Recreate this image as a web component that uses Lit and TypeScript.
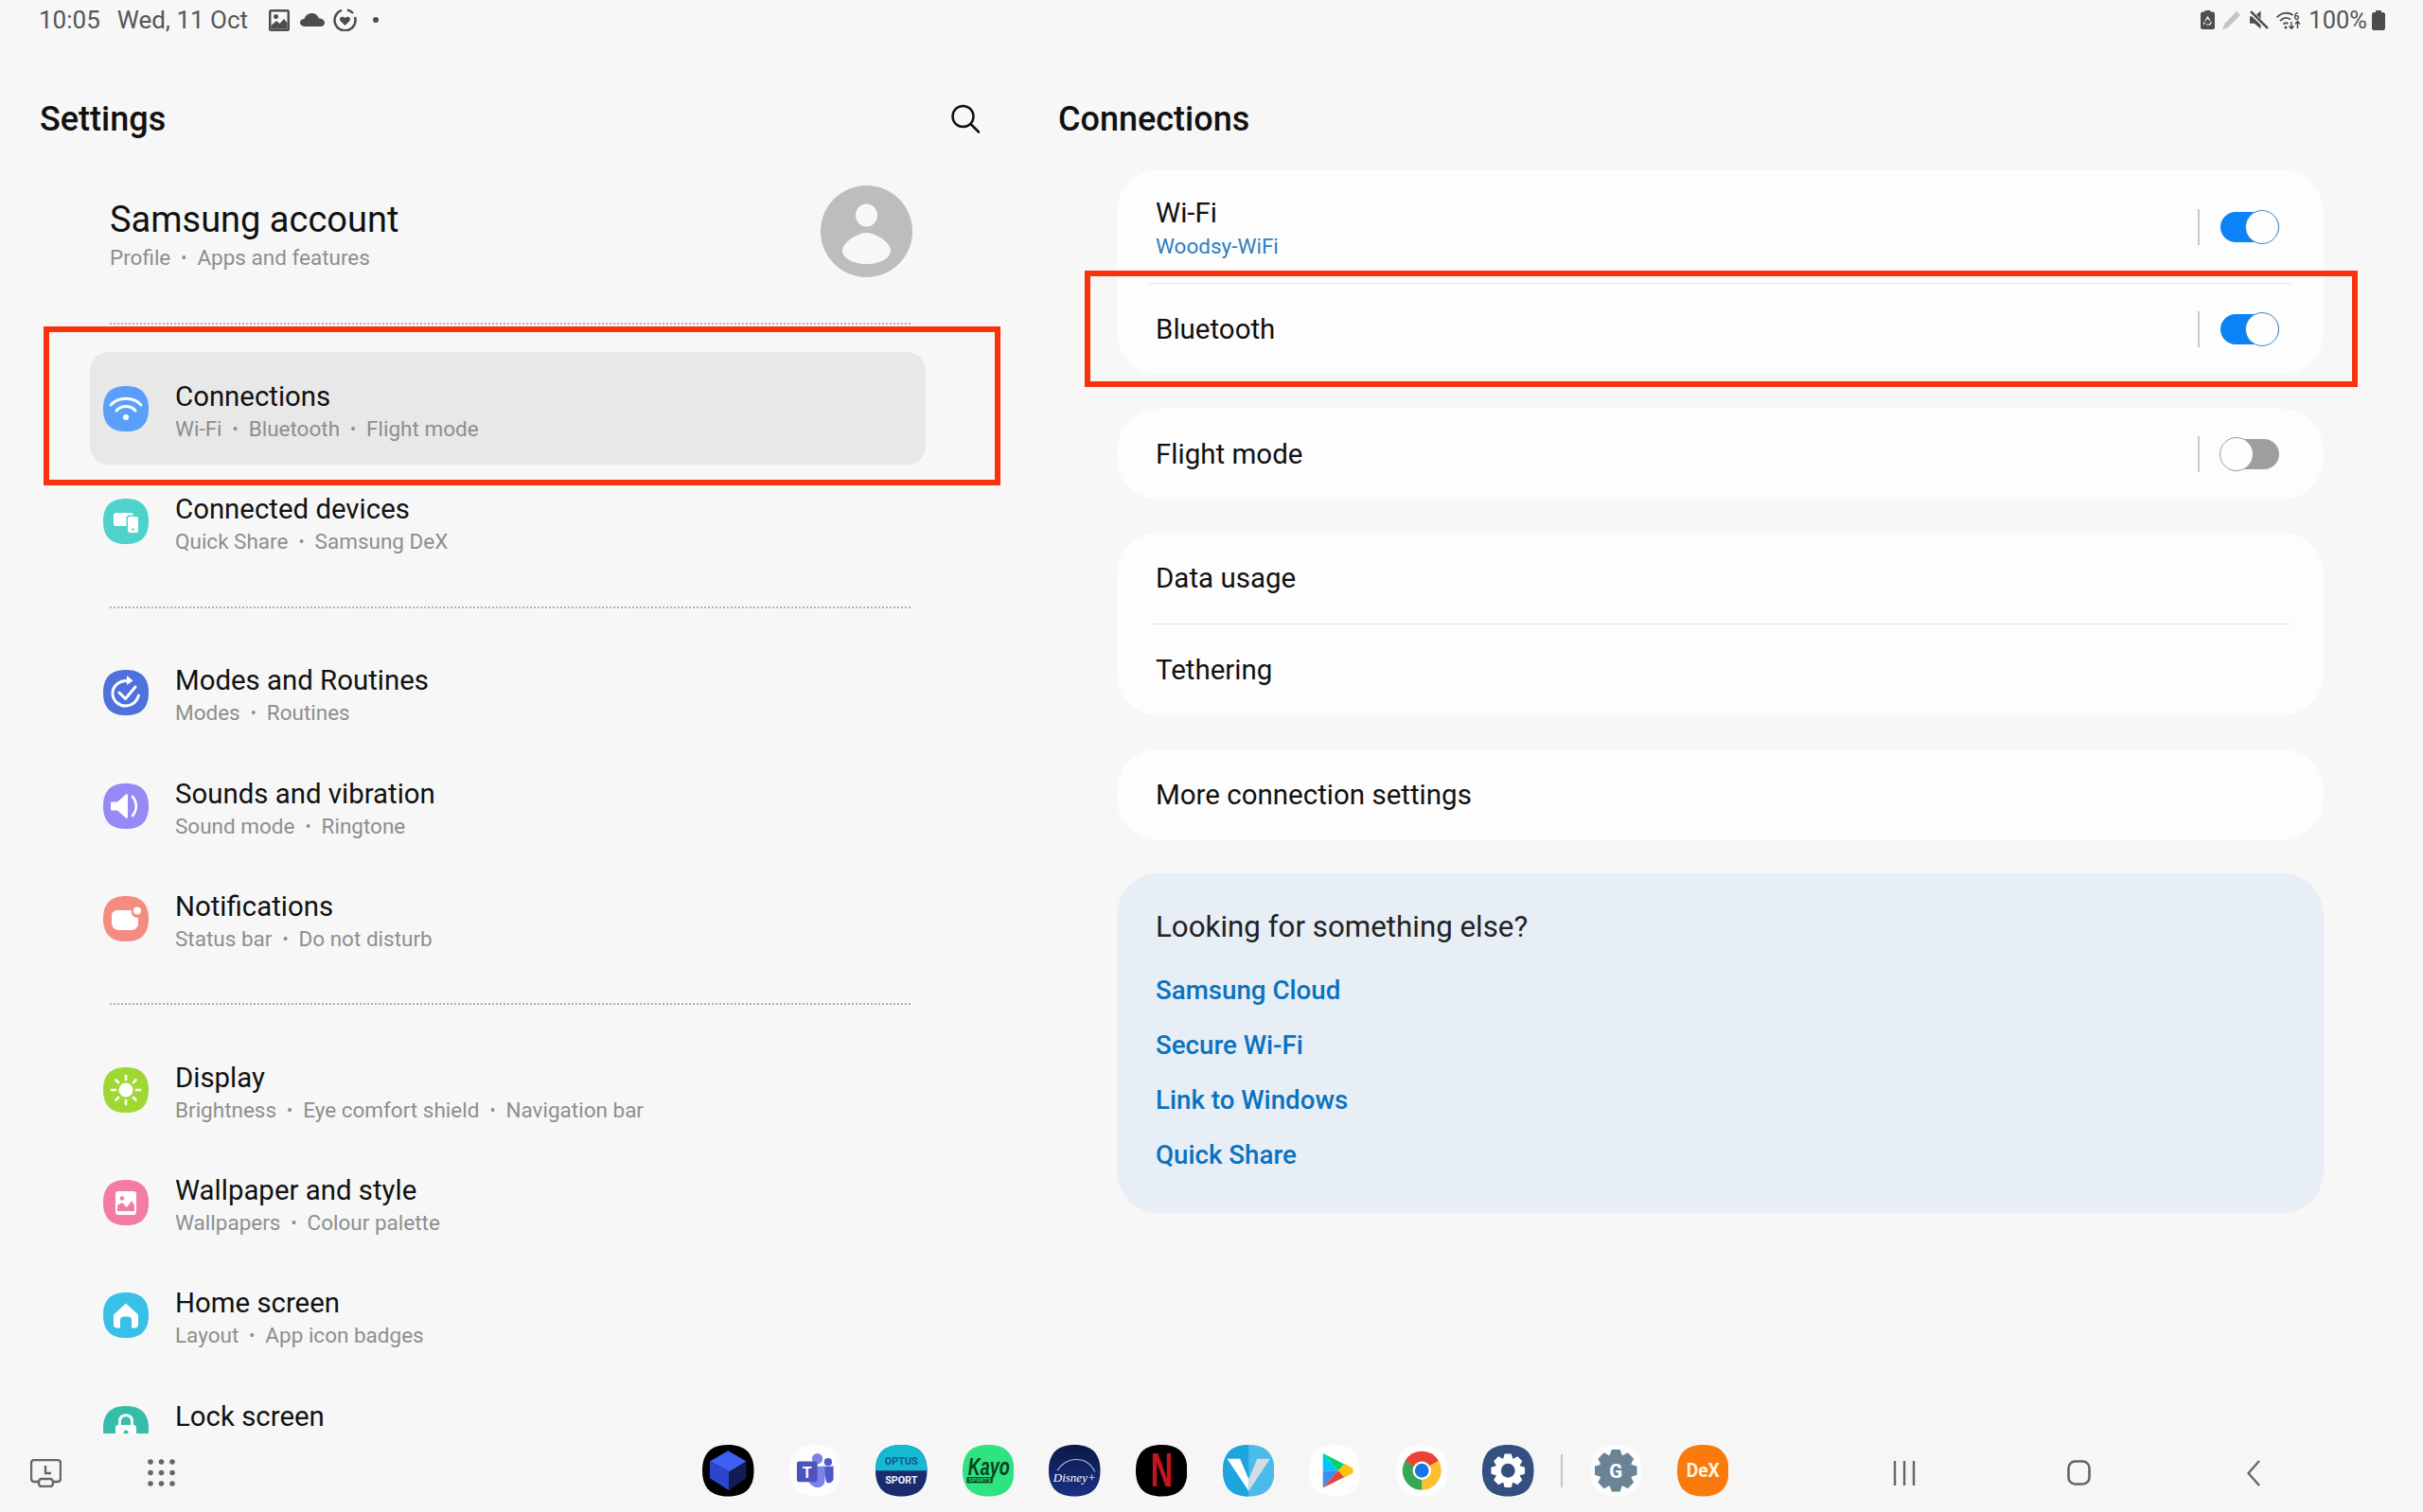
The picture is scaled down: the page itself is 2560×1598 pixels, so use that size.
import { LitElement, html, css, svg } from "lit";
import { customElement } from "lit/decorators.js";

const SQ = "M24 0C40 0 48 8 48 24C48 40 40 48 24 48C8 48 0 40 0 24C0 8 8 0 24 0Z";

function gear(cx: number, cy: number, ro: number, ri: number, n: number) {
  const pts: string[] = [];
  for (let i = 0; i < n; i++) {
    const a = (i / n) * Math.PI * 2 - Math.PI / 2;
    const s = Math.PI / n;
    const p = (r: number, t: number) => `${(cx + r * Math.cos(t)).toFixed(2)} ${(cy + r * Math.sin(t)).toFixed(2)}`;
    pts.push(p(ri, a - s * 0.95), p(ro, a - s * 0.5), p(ro, a + s * 0.5), p(ri, a + s * 0.95));
  }
  return "M" + pts.join("L") + "Z";
}
function sector(cx: number, cy: number, r: number, a0: number, a1: number) {
  const t = (d: number) => (d * Math.PI) / 180;
  return `M${cx} ${cy}L${cx + r * Math.cos(t(a0))} ${cy + r * Math.sin(t(a0))}A${r} ${r} 0 0 1 ${cx + r * Math.cos(t(a1))} ${cy + r * Math.sin(t(a1))}Z`;
}

const settingIcons: Record<string, any> = {
  wifi: svg`<path d=${SQ} fill="#5a9ffb"/><g fill="none" stroke="#fff" stroke-width="3" stroke-linecap="round"><path d="M8 20C16 11 32 11 40 20"/><path d="M14 26C19 20 29 20 34 26"/></g><circle cx="24" cy="33" r="3" fill="#fff"/>`,
  devices: svg`<path d=${SQ} fill="#4fd2cc"/><rect x="11" y="15" width="21" height="14" rx="2.5" fill="#fff"/><rect x="24.5" y="17.5" width="13.5" height="20" rx="3" fill="#4fd2cc"/><rect x="26" y="19" width="11" height="17" rx="2" fill="#fff"/><circle cx="31.5" cy="32.5" r="1.2" fill="#4fd2cc"/>`,
  modes: svg`<path d=${SQ} fill="#4f71dc"/><g fill="none" stroke="#fff" stroke-width="3" stroke-linecap="round" stroke-linejoin="round"><path d="M27 11.5C16 10.5 9.5 18 10 25.500C10.500 33 17 38.500 24.500 38C31 37.500 36 33 37.500 27"/><path d="M17 24L23.500 30.500L34 18"/></g><path d="M25 6L31.500 11.500L25 16Z" fill="#fff"/>`,
  sound: svg`<path d=${SQ} fill="#9589f6"/><path d="M9 19.500H15L24 11.500C25 11 26 11.500 26 12.500V35.500C26 36.500 25 37 24 36.500L15 28.500H9C8.500 28.500 8 28 8 27.500V20.500C8 20 8.500 19.500 9 19.500Z" fill="#fff"/><path d="M31 14C36 19 36 29 31 34" fill="none" stroke="#fff" stroke-width="2.600" stroke-linecap="round"/>`,
  notif: svg`<path d=${SQ} fill="#f58c82"/><path d="M15 15H30C29 20 32 23 37 23V29C37 33 34 36 30 36H17C12 36 9 33 9 28V21C9 17.500 11.500 15 15 15Z" fill="#fff"/><circle cx="36" cy="15.500" r="4" fill="#fff"/>`,
  display: svg`<path d=${SQ} fill="#9fd833"/><circle cx="24" cy="24" r="7.500" fill="#fff"/><g stroke="#fff" stroke-width="2.600" stroke-linecap="round"><path d="M24 9V13"/><path d="M24 35V39"/><path d="M9 24H13"/><path d="M35 24H39"/><path d="M13.500 13.500L16 16"/><path d="M32 32L34.500 34.500"/><path d="M13.500 34.500L16 32"/><path d="M32 16L34.500 13.500"/></g>`,
  wall: svg`<path d=${SQ} fill="#f47ba1"/><rect x="13" y="12" width="22" height="25" rx="3" fill="#fff"/><circle cx="20" cy="19.500" r="2.300" fill="#f47ba1"/><path d="M15 33V27L20 24L25 29L30 22L33 27V33Z" fill="#f47ba1"/>`,
  home: svg`<path d=${SQ} fill="#38c1e6"/><path d="M24 11.500L37 23.500V34C37 36 35.500 37.500 33.500 37.500H30V29C30 27 28.500 25.500 26.500 25.500H21.500C19.500 25.500 18 27 18 29V37.500H14.500C12.500 37.500 11 36 11 34V23.500Z" fill="#fff"/>`,
  lock: svg`<path d=${SQ} fill="#35bda9"/><rect x="13" y="20" width="22" height="18" rx="3" fill="#fff"/><path d="M17.500 21V16C17.500 7.500 30.500 7.500 30.500 16V21" fill="none" stroke="#fff" stroke-width="3"/><circle cx="24" cy="28" r="2.500" fill="#35bda9"/>`,
};

type Row = { icon: string; title: string; sub: string[]; selected?: boolean };
const groups: Row[][] = [
  [
    { icon: "wifi", title: "Connections", sub: ["Wi-Fi", "Bluetooth", "Flight mode"], selected: true },
    { icon: "devices", title: "Connected devices", sub: ["Quick Share", "Samsung DeX"] },
  ],
  [
    { icon: "modes", title: "Modes and Routines", sub: ["Modes", "Routines"] },
    { icon: "sound", title: "Sounds and vibration", sub: ["Sound mode", "Ringtone"] },
    { icon: "notif", title: "Notifications", sub: ["Status bar", "Do not disturb"] },
  ],
  [
    { icon: "display", title: "Display", sub: ["Brightness", "Eye comfort shield", "Navigation bar"] },
    { icon: "wall", title: "Wallpaper and style", sub: ["Wallpapers", "Colour palette"] },
    { icon: "home", title: "Home screen", sub: ["Layout", "App icon badges"] },
    { icon: "lock", title: "Lock screen", sub: [] },
  ],
];

const dockIcons: any[] = [
  svg`<path d=${SQ} fill="#000"/><polygon points="24,5.500 41,15.500 25,25 7,15.500" fill="#3f5ff2"/><polygon points="7,15.500 25,25 25,42.500 7,31" fill="#2c46c9"/><polygon points="25,25 41,15.500 41,31 25,42.500" fill="#111c55"/>`,
  svg`<path d=${SQ} fill="#fdfdfd"/><circle cx="26" cy="13" r="5" fill="#7b83eb"/><circle cx="36" cy="16" r="3.600" fill="#5059c9"/><path d="M31 20H41V31C41 35 37 36 34.500 35Z" fill="#5059c9"/><path d="M17 20H33V33C33 39 27 41 23 39C19 37 17 34 17 30Z" fill="#7b83eb"/><rect x="7" y="15.500" width="19" height="19" rx="2" fill="#4b53bc"/><text x="16.500" y="30.500" text-anchor="middle" font-family="Roboto,sans-serif" font-size="14" font-weight="700" fill="#fff">T</text>`,
  svg`<path d=${SQ} fill="#1b2c6e"/><path d="M24 0C40 0 48 8 48 24H0C0 8 8 0 24 0Z" fill="#15b9d2"/><text x="24" y="18.500" text-anchor="middle" font-family="Roboto,sans-serif" font-size="9.500" font-weight="700" fill="#14548f">OPTUS</text><text x="24" y="36.500" text-anchor="middle" font-family="Roboto,sans-serif" font-size="9.500" font-weight="700" fill="#eef2fb">SPORT</text>`,
  svg`<path d=${SQ} fill="#2ee380"/><g transform="translate(5 0) scale(0.72 1)"><text x="0" y="28.500" font-family="'Liberation Sans',sans-serif" font-size="22" font-weight="700" font-style="italic" fill="#0b3d22">Kayo</text></g><rect x="4" y="30" width="24" height="5.500" fill="#0b3d22"/><text x="16" y="34.700" text-anchor="middle" font-family="Roboto,sans-serif" font-size="5.500" font-weight="700" fill="#2ee380">SPORTS</text>`,
  svg`<defs><linearGradient id="dis" x1="0" y1="0" x2="0" y2="1"><stop offset="0" stop-color="#0b1846"/><stop offset="1" stop-color="#1c3184"/></linearGradient></defs><path d=${SQ} fill="url(#dis)"/><path d="M8 24C15 11 35 9 43 25" fill="none" stroke="#9fc6e8" stroke-width="1"/><text x="24" y="34" text-anchor="middle" font-family="'Liberation Serif',serif" font-size="11.500" font-style="italic" fill="#fff">Disney+</text>`,
  svg`<path d=${SQ} fill="#000"/><g transform="translate(24 39) scale(0.65 1)"><text x="0" y="0" text-anchor="middle" font-family="'Liberation Sans',sans-serif" font-size="44" font-weight="700" fill="#c8141c">N</text></g>`,
  svg`<path d=${SQ} fill="#4cbbe9"/><path d="M24 0C8 0 0 8 0 24C0 40 8 48 24 48Z" fill="#1ea4df"/><polygon points="4,13 16,13 24,32 24,43" fill="#fff"/><polygon points="24,32 32,13 44,13 24,43" fill="#d4dde3"/>`,
  svg`<path d=${SQ} fill="#fdfdfd"/><polygon points="13,8 13,24 27,24" fill="#00c4ff"/><polygon points="13,8 27,24 33,18" fill="#00d46f"/><polygon points="13,40 13,24 27,24" fill="#3d8df0"/><polygon points="13,40 27,24 33,30" fill="#ea4335"/><polygon points="27,24 33,17.500 41,22 41,26 33,30.500" fill="#ffc107"/>`,
  svg`<path d=${SQ} fill="#fdfdfd"/><path d=${sector(24, 24, 18, -150, -30)} fill="#ea4335"/><path d=${sector(24, 24, 18, -30, 90)} fill="#fbc02d"/><path d=${sector(24, 24, 18, 90, 210)} fill="#34a853"/><path d="M8.400 15L24 15L24 24Z" fill="#ea4335"/><circle cx="24" cy="24" r="8.500" fill="#fff"/><circle cx="24" cy="24" r="6.500" fill="#1a73e8"/>`,
  svg`<path d=${SQ} fill="#33507f"/><path d=${gear(24, 24, 16, 12, 8)} fill="#fff"/><circle cx="24" cy="24" r="6.500" fill="#33507f"/>`,
  svg`<path d=${SQ} fill="#fdfdfd"/><path d=${gear(24, 24, 20, 15.500, 8)} fill="#6b8495"/><text x="24" y="30.500" text-anchor="middle" font-family="Roboto,sans-serif" font-size="18" font-weight="700" fill="#fff">G</text>`,
  svg`<path d=${SQ} fill="#fa7a0d"/><text x="24" y="30" text-anchor="middle" font-family="Roboto,sans-serif" font-size="17" font-weight="700" fill="#fff3dd">DeX</text>`,
];

@customElement("app-root")
export class AppRoot extends LitElement {
  static styles = css`
    :host { display: flex; flex-direction: column; position: relative; width: 2560px; height: 1598px; overflow: hidden; background: #f7f7f7; font-family: Roboto, "Noto Sans", sans-serif; color: #111; }
    svg { display: block; flex: none; }
    .status { flex: none; height: 42px; display: flex; align-items: center; padding: 0 40px 0 41px; font-size: 26px; color: #555; }
    .date { margin-left: 18px; margin-right: 22px; }
    .st-left { display: flex; align-items: center; }
    .st-right { margin-left: auto; display: flex; align-items: center; gap: 8px; }
    .pct { margin-right: -3px; font-size: 25.500px; }
    .main { flex: 1; min-height: 0; display: flex; overflow: hidden; }
    .left { flex: none; width: 1118px; }
    .head { height: 84px; display: flex; align-items: center; justify-content: space-between; font-size: 36px; font-weight: 500; color: #111; padding-top: 42px; box-sizing: content-box; }
    .left .head { padding-left: 42px; padding-right: 82px; }
    .account { margin-top: 28px; height: 97px; display: flex; justify-content: space-between; padding: 0 154px 0 116px; }
    .acc-title { font-size: 38px; line-height: 46px; margin-top: 13px; }
    .acc-sub { font-size: 22.500px; line-height: 30px; margin-top: 2px; color: #8e8e8e; }
    .dots { height: 2px; margin: 0 155px 0 116px; background-image: repeating-linear-gradient(90deg, #b0b0b0 0 2px, transparent 2px 4px); }
    .account + .dots { margin-top: 48px; margin-bottom: 29px; }
    .group + .dots { margin-top: 30px; margin-bottom: 30px; }
    .group + .dots.last { margin-top: 29px; margin-bottom: 30px; }
    .group { width: 883px; margin-left: 95px; }
    .row { height: 119.400px; display: flex; align-items: center; gap: 28px; padding-left: 14px; border-radius: 20px; box-sizing: border-box; }
    .row.sel { background: #e8e8e8; }
    .r-text { padding-top: 5px; }
    .r-title { font-size: 29.400px; line-height: 36px; color: #111; }
    .r-sub { font-size: 22.500px; line-height: 30px; height: 30px; margin-top: 1px; color: #8e8e8e; white-space: nowrap; }
    .sep { font-size: 18px; margin: 0 11px; vertical-align: 1px; color: #8e8e8e; }
    .right { flex: 1; }
    .cards { margin: 12px 0 0 62px; width: 1275px; display: flex; flex-direction: column; gap: 35.500px; }
    .card { background: #fdfdfd; border-radius: 44px; }
    .item { display: flex; align-items: center; padding: 0 47px 0 41px; font-size: 29.500px; color: #111; box-sizing: border-box; }
    .item.h96 { height: 96px; }
    .item.h119 { height: 119px; }
    .grow { flex: 1; }
    .wifi-sub { font-size: 22.500px; line-height: 30px; color: #2f7fc2; margin-top: 2px; }
    .wifi-t { line-height: 36px; padding-top: 3px; }
    .vline { width: 2px; height: 38px; background: #c9c9c9; margin-right: 22px; }
    .toggle { width: 62px; height: 32px; border-radius: 16px; background: #0b82f6; display: flex; align-items: center; justify-content: flex-end; }
    .toggle.off { background: #9e9e9e; justify-content: flex-start; }
    .knob { width: 36px; height: 36px; border-radius: 50%; box-sizing: border-box; background: #fdfdfd; border: 1.500px solid #3d8ac9; flex: none; }
    .off .knob { border-color: #9a9a9a; margin-left: -1px; }
    .hr { height: 1px; background: #e6e6e6; margin: 0 34px; }
    .look { background: #e7eef5; border-radius: 44px; height: 359px; padding: 37px 41px 0; box-sizing: border-box; }
    .look-h { font-size: 31.300px; line-height: 40px; color: #222; margin-bottom: 18px; }
    .link { font-size: 27.700px; font-weight: 500; line-height: 58px; color: #0a72c2; }
    .bar { flex: none; height: 83px; display: flex; align-items: center; padding-left: 32px; background: #f6f6f6; }
    .grid-i { margin-left: 91px; }
    .dock { display: flex; align-items: center; gap: 37.100px; margin-left: 557px; margin-bottom: 4px; }
    .dock svg { width: 54.500px; height: 54.500px; }
    .dock-sep { width: 2px; height: 35px; background: #c4c4c4; margin: 0 -8.500px; }
    .nav1 { margin-left: 174px; }
    .nav2 { margin-left: 160px; }
    .nav3 { margin-left: 165px; }
    .mark { position: absolute; box-sizing: border-box; border: 6px solid #f9320c; pointer-events: none; }
    .m1 { left: 46px; top: 345px; width: 1011px; height: 168px; }
    .m2 { left: 1146px; top: 286px; width: 1345px; height: 123px; }
  `;

  private row(r: Row) {
    return html`<div class="row ${r.selected ? "sel" : ""}">
      <svg width="48" height="48" viewBox="0 0 48 48">${settingIcons[r.icon]}</svg>
      <div class="r-text">
        <div class="r-title">${r.title}</div>
        <div class="r-sub">${r.sub.map((s, i) => html`${i ? html`<span class="sep">•</span>` : ""}${s}`)}</div>
      </div>
    </div>`;
  }

  private toggle(on: boolean) {
    return html`<span class="vline"></span><span class="toggle ${on ? "" : "off"}"><span class="knob"></span></span>`;
  }

  render() {
    return html`
      <div class="status">
        <div class="st-left">
          <span>10:05</span><span class="date">Wed, 11 Oct</span>
          <svg width="22" height="23" viewBox="0 0 22 23"><rect width="22" height="23" rx="2.500" fill="#4d4d4d"/><rect x="2.500" y="2.500" width="17" height="18" fill="#f7f7f7"/><circle cx="7.500" cy="7.500" r="2.500" fill="#4d4d4d"/><path d="M2.500 17L8 12L11.500 15L16 10L19.500 14V20.500H2.500Z" fill="#4d4d4d"/></svg>
          <svg style="margin-left:11px" width="26" height="14" viewBox="0 0 26 14"><path d="M6 14C2 14 0 12 0 10C0 7.500 2 6 4.500 6C5.500 2.500 8.500 0 12.500 0C16.500 0 19 2.500 20 5.500C23.500 5.500 26 7.500 26 10C26 12 24.500 14 22 14Z" fill="#4d4d4d"/></svg>
          <svg style="margin-left:9px" width="25" height="24" viewBox="0 0 25 24"><path d="M9 1.900A11 11 0 1 0 23 9M15 1.500A11 11 0 0 1 21 5" fill="none" stroke="#4d4d4d" stroke-width="2.500"/><path d="M12.500 18L7.500 13C5.500 10 9.500 7 12.500 10C15.500 7 19.500 10 17.500 13Z" fill="#4d4d4d"/></svg>
          <svg style="margin-left:17px" width="6" height="6" viewBox="0 0 6 6"><circle cx="3" cy="3" r="3" fill="#4d4d4d"/></svg>
        </div>
        <div class="st-right">
          <svg width="15" height="20" viewBox="0 0 15 20"><path d="M4.500 0H10.500V1.500H13C14 1.500 15 2.500 15 3.500V18C15 19 14 20 13 20H2C1 20 0 19 0 18V3.500C0 2.500 1 1.500 2 1.500H4.500Z" fill="#4d4d4d"/><path d="M5 11L7.500 7L10 11M11.500 12L10 15H6M4 12L3.500 15" fill="none" stroke="#f7f7f7" stroke-width="1.200"/></svg>
          <svg width="20" height="21" viewBox="0 0 20 21"><path d="M15 1L19 5L6 18L0 20.500L2 14.500Z" fill="#c4c4c4"/></svg>
          <svg width="21" height="20" viewBox="0 0 20 19"><path d="M1 6H5.500L12 0.500V18.500L5.500 13H1Z" fill="#4d4d4d"/><path d="M1 1L19 18" stroke="#f7f7f7" stroke-width="4.500"/><path d="M2 1L19 18" stroke="#4d4d4d" stroke-width="2.400"/></svg>
          <svg width="26" height="20" viewBox="0 0 26 20"><g fill="none" stroke="#4d4d4d" stroke-width="1.800"><path d="M0.500 7.500C5.500 2 13 1.500 17.500 5"/><path d="M4 11C7.500 7.500 11.500 7 15 9.500"/><path d="M7.500 14.500C9 13 11 13 12.500 14"/></g><circle cx="10" cy="18" r="1.500" fill="#4d4d4d"/><text x="18.500" y="9.500" font-family="Roboto,sans-serif" font-size="10" font-weight="700" fill="#4d4d4d">6</text><path d="M16 12V19M13.500 16.500L16 19.500L18.500 16.500M22.500 19V12M20 14.500L22.500 11.500L25 14.500" fill="none" stroke="#4d4d4d" stroke-width="1.500"/></svg>
          <span class="pct">100%</span>
          <svg width="14" height="21" viewBox="0 0 14 21"><path d="M4 0H10V2H12C13 2 14 3 14 4V19C14 20 13 21 12 21H2C1 21 0 20 0 19V4C0 3 1 2 2 2H4Z" fill="#4d4d4d"/></svg>
        </div>
      </div>

      <div class="main">
        <div class="left">
          <div class="head">
            <span>Settings</span>
            <svg width="32" height="32" viewBox="0 0 32 32"><circle cx="13.500" cy="13" r="11" fill="none" stroke="#111" stroke-width="2.500"/><path d="M21.500 21L30 29.500" stroke="#111" stroke-width="2.500" stroke-linecap="round"/></svg>
          </div>
          <div class="account">
            <div>
              <div class="acc-title">Samsung account</div>
              <div class="acc-sub">Profile<span class="sep">•</span>Apps and features</div>
            </div>
            <svg width="97" height="97" viewBox="0 0 97 97"><circle cx="48.500" cy="48.500" r="48.500" fill="#bdbdbd"/><ellipse cx="48.500" cy="31.500" rx="11.500" ry="12" fill="#f7f7f7"/><path d="M48.500 50C58 50 74 60 74 69C74 77 62 83 48.500 83C35 83 23 77 23 69C23 60 39 50 48.500 50Z" fill="#f7f7f7"/></svg>
          </div>
          <div class="dots"></div>
          ${groups.map((g, i) => html`${i ? html`<div class="dots ${i === 2 ? "last" : ""}"></div>` : ""}<div class="group">${g.map((r) => this.row(r))}</div>`)}
        </div>

        <div class="right">
          <div class="head">Connections</div>
          <div class="cards">
            <div class="card">
              <div class="item h119"><div class="grow"><div class="wifi-t">Wi-Fi</div><div class="wifi-sub">Woodsy-WiFi</div></div>${this.toggle(true)}</div>
              <div class="hr"></div>
              <div class="item h96"><span class="grow">Bluetooth</span>${this.toggle(true)}</div>
            </div>
            <div class="card"><div class="item h96"><span class="grow">Flight mode</span>${this.toggle(false)}</div></div>
            <div class="card">
              <div class="item h96">Data usage</div>
              <div class="hr"></div>
              <div class="item h96">Tethering</div>
            </div>
            <div class="card"><div class="item h96">More connection settings</div></div>
            <div class="look">
              <div class="look-h">Looking for something else?</div>
              <div class="link">Samsung Cloud</div>
              <div class="link">Secure Wi-Fi</div>
              <div class="link">Link to Windows</div>
              <div class="link">Quick Share</div>
            </div>
          </div>
        </div>
      </div>

      <div class="bar">
        <svg width="33" height="30" viewBox="0 0 33 30"><path d="M8 24H4C2.500 24 1 22.500 1 21V4C1 2.500 2.500 1 4 1H29C30.500 1 32 2.500 32 4V21C32 22.500 30.500 24 29 24H25" fill="none" stroke="#666" stroke-width="2.400"/><rect x="9" y="21" width="15" height="8" rx="3" fill="none" stroke="#666" stroke-width="2.400"/><path d="M16 7V15H22" fill="none" stroke="#666" stroke-width="2.400"/></svg>
        <svg class="grid-i" width="29" height="29" viewBox="0 0 29 29" fill="#666">${[3, 14.5, 26].flatMap((y) => [3, 14.5, 26].map((x) => svg`<circle cx=${x} cy=${y} r="2.800"/>`))}</svg>
        <div class="dock">
          ${dockIcons.map((d, i) => html`${i === 10 ? html`<span class="dock-sep"></span>` : ""}<svg viewBox="0 0 48 48">${d}</svg>`)}
        </div>
        <svg class="nav1" width="24" height="26" viewBox="0 0 24 26"><path d="M2 0V26M12 0V26M22 0V26" stroke="#666" stroke-width="2.400"/></svg>
        <svg class="nav2" width="25" height="27" viewBox="0 0 25 27"><rect x="1.500" y="1.500" width="22" height="24" rx="7" fill="none" stroke="#666" stroke-width="2.600"/></svg>
        <svg class="nav3" width="14" height="28" viewBox="0 0 14 28"><path d="M13 1L1.500 14L13 27" fill="none" stroke="#666" stroke-width="2.400"/></svg>
      </div>

      <div class="mark m1"></div>
      <div class="mark m2"></div>
    `;
  }
}
